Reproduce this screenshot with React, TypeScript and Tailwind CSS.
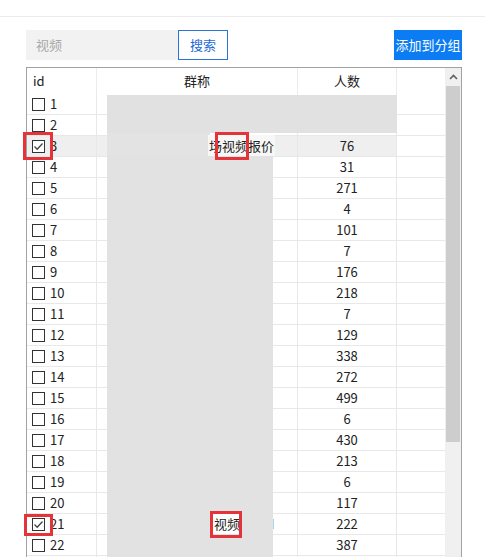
import React from 'react'

interface Group {
  id: number
  count: number | null
  checked?: boolean
}

const groups: Group[] = [
  { id: 1, count: 94 },
  { id: 2, count: null },
  { id: 3, count: 76, checked: true },
  { id: 4, count: 31 },
  { id: 5, count: 271 },
  { id: 6, count: 4 },
  { id: 7, count: 101 },
  { id: 8, count: 7 },
  { id: 9, count: 176 },
  { id: 10, count: 218 },
  { id: 11, count: 7 },
  { id: 12, count: 129 },
  { id: 13, count: 338 },
  { id: 14, count: 272 },
  { id: 15, count: 499 },
  { id: 16, count: 6 },
  { id: 17, count: 430 },
  { id: 18, count: 213 },
  { id: 19, count: 6 },
  { id: 20, count: 117 },
  { id: 21, count: 222, checked: true },
  { id: 22, count: 387 },
]

function Checkbox({ checked }: { checked?: boolean }) {
  return (
    <span className="w-[13px] h-[13px] border border-[#333] bg-white flex items-center justify-center shrink-0">
      {checked && (
        <svg width="11" height="11" viewBox="0 0 11 11">
          <polyline points="1.5,5.5 4.2,8.2 9.5,2.5" fill="none" stroke="#444" strokeWidth="1.3" />
        </svg>
      )}
    </span>
  )
}

export default function App() {
  return (
    <div
      className="relative w-[485px] h-[557px] overflow-hidden bg-white text-[#222] text-[13px]"
      style={{ fontFamily: '"Noto Sans CJK SC", "Noto Sans", sans-serif' }}
    >
      <div className="h-[17px] border-b border-[#ececec]" />

      {/* toolbar */}
      <div className="flex items-center pl-[26px] pr-[23px] mt-[13px] h-[30px]">
        <div className="w-[152px] h-[30px] bg-[#f2f2f2] flex items-center pl-[10px] text-[#a8a8a8]">视频</div>
        <button className="w-[50px] h-[30px] border border-[#2a73d9] bg-white text-[#1f6ad8] text-[13px]">搜索</button>
        <button className="ml-auto w-[68px] h-[30px] bg-[#0b7cf4] text-white text-[13px]">添加到分组</button>
      </div>

      {/* table */}
      <div className="ml-[26px] mt-[7px] w-[436px] h-[500px] border border-[#a2a2a2] flex overflow-hidden">
        <div className="flex-1 flex flex-col">
          <div className="flex h-[26px] shrink-0 leading-[26px]">
            <div className="w-[70px] border-r border-[#ececec] pl-[6px]">id</div>
            <div className="w-[201px] border-r border-[#ececec] text-center">群称</div>
            <div className="w-[99px] border-r border-[#ececec] text-center">人数</div>
            <div className="flex-1" />
          </div>
          {groups.map((g) => (
            <div key={g.id} className="flex h-[21px] shrink-0 leading-[20px]">
              <div
                className={`w-[70px] border-r border-b border-[#e8e8e8] flex items-center gap-[5px] pl-[5px] ${g.id === 3 ? 'bg-[#efefef]' : ''}`}
              >
                <Checkbox checked={g.checked} />
                <span>{g.id}</span>
              </div>
              <div className={`w-[201px] border-r border-b border-[#e8e8e8] ${g.id === 3 ? 'bg-[#efefef]' : ''}`} />
              <div
                className={`w-[99px] border-r border-b border-[#e8e8e8] text-center ${g.id === 3 ? 'bg-[#efefef]' : ''}`}
              >
                {g.count}
              </div>
              <div className="flex-1 border-b border-[#e8e8e8]" />
            </div>
          ))}
          <div className="flex flex-1">
            <div className="w-[70px] border-r border-[#e8e8e8]" />
            <div className="w-[201px] border-r border-[#e8e8e8]" />
            <div className="w-[99px] border-r border-[#e8e8e8]" />
          </div>
        </div>

        {/* scrollbar */}
        <div className="w-[16px] bg-[#f0f0f0] flex flex-col">
          <div className="h-[18px] flex items-center justify-center">
            <svg width="9" height="6" viewBox="0 0 9 6">
              <polyline points="1,5 4.5,1.5 8,5" fill="none" stroke="#606060" strokeWidth="1.6" />
            </svg>
          </div>
          <div className="h-[356px] mx-[1px] bg-[#cdcdcd]" />
        </div>
      </div>

      {/* privacy mosaic */}
      <div className="absolute left-[107px] top-[95px] w-[290px] h-[38px] bg-[#e1e1e1]" />
      <div className="absolute left-[107px] top-[133px] w-[103px] h-[22px] bg-[#e3e3e3]" />
      <div className="absolute left-[107px] top-[155px] w-[166px] h-[402px] bg-[#e2e2e2]" />
      <div className="absolute left-[208px] top-[135px] h-[21px] bg-[#f7f7f7] leading-[21px] whitespace-nowrap px-[1px]">
        场视频报价
      </div>
      <div className="absolute left-[212px] top-[513px] w-[30px] h-[21px] bg-white leading-[21px] whitespace-nowrap pl-[2px]">
        视频
      </div>
      <div className="absolute left-[273px] top-[519px] w-[1px] h-[10px] bg-[#a9d4f2]" />

      {/* annotations */}
      <div className="absolute left-[23px] top-[132px] w-[30px] h-[28px] border-[3px] border-[#e5333a]" />
      <div className="absolute left-[215px] top-[132px] w-[34px] h-[28px] border-[3px] border-[#e5333a]" />
      <div className="absolute left-[24px] top-[514px] w-[29px] h-[22px] border-[3px] border-[#e5333a]" />
      <div className="absolute left-[210px] top-[511px] w-[32px] h-[27px] border-[3px] border-[#e5333a]" />
    </div>
  )
}
